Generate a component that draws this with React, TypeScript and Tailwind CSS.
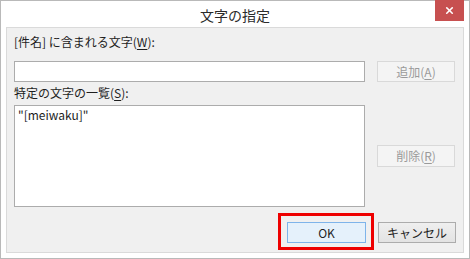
import { X } from "lucide-react";

const font = { fontFamily: '"Meiryo UI", "Noto Sans CJK JP", "Noto Sans", sans-serif' };

function Mnemonic({ ch }: { ch: string }) {
  return <span className="underline underline-offset-2 decoration-1">{ch}</span>;
}

export default function App() {
  return (
    <div
      className="w-[470px] h-[259px] bg-white border border-[#b9b9b9] flex flex-col text-[12px] text-[#1e1e1e]"
      style={font}
    >
      {/* title bar */}
      <div className="relative h-[26px] flex items-center justify-center shrink-0">
        <span className="text-[14px] text-[#2b2b2b] leading-none mt-[2px]">文字の指定</span>
        <div className="absolute right-[5px] -top-px w-[29px] h-[21px] bg-[#c75050] flex items-center justify-center">
          <X className="w-[11px] h-[11px] text-white" strokeWidth={3.5} />
        </div>
      </div>

      {/* body */}
      <div className="mx-[5px] mb-[5px] flex-1 bg-[#f0f0f0] border border-[#dadada] px-[7px] pt-[6px] pb-[9px] flex flex-col">
        <div className="flex gap-[12px]">
          {/* left column */}
          <div className="w-[351px] flex flex-col">
            <div className="h-[16px] leading-[16px]">
              [件名] に含まれる文字(<Mnemonic ch="W" />):
            </div>
            <div className="mt-[11px] h-[21px] bg-white border border-[#acacac]" />
            <div className="mt-[3px] h-[16px] leading-[16px]">
              特定の文字の一覧(<Mnemonic ch="S" />):
            </div>
            <div className="mt-[4px] h-[102px] bg-white border border-[#acacac] px-[3px] pt-[1px] leading-[16px]">
              "[meiwaku]"
            </div>
          </div>

          {/* right column */}
          <div className="w-[78px] flex flex-col pt-[27px]">
            <div className="h-[21px] bg-[#f4f4f4] border border-[#d9d9d9] flex items-center justify-center text-[#9a9a9a]">
              追加(<Mnemonic ch="A" />)
            </div>
            <div className="mt-[63px] h-[22px] bg-[#f4f4f4] border border-[#d9d9d9] flex items-center justify-center text-[#9a9a9a]">
              削除(<Mnemonic ch="R" />)
            </div>
          </div>
        </div>

        {/* bottom buttons */}
        <div className="mt-auto flex justify-end gap-[12px]">
          <div className="relative w-[79px] h-[21px] bg-[#e5f1fb] border border-[#7eb4ea] flex items-center justify-center">
            OK
            <div className="absolute -left-[10px] -right-[9px] -top-[10px] -bottom-[8px] border-[3px] border-[#ee0000]" />
          </div>
          <div className="w-[78px] h-[21px] bg-gradient-to-b from-[#efefef] to-[#e3e3e3] border border-[#acacac] flex items-center justify-center">
            キャンセル
          </div>
        </div>
      </div>
    </div>
  );
}
